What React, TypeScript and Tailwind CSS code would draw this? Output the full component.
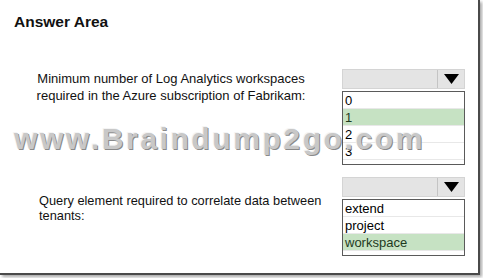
const Dropdown = ({ options, selected }: { options: string[]; selected: number }) => {
  return (
    <div className="w-[123px]">
      <div className="flex h-[20px] border border-[#d4d4d4] bg-[#e4e4e4]">
        <div className="flex-1" />
        <div className="flex w-[27px] items-center justify-center border-l border-[#c4c4c4]">
          <svg width="15" height="10" viewBox="0 0 15 10">
            <polygon points="0,0 15,0 7.5,10" fill="#000" />
          </svg>
        </div>
      </div>
      <div className="mt-[2px] border border-[#5a5a5a] bg-white pb-[4px]">
        {options.map((o, i) => (
          <div
            key={o}
            className={
              "h-[17px] border-b border-[#e8e8e8] pl-[2px] text-[13px] leading-[17px] " +
              (i === selected ? "bg-[#c6e2c3] text-[#1e3a1e]" : "text-black")
            }
          >
            {o}
          </div>
        ))}
      </div>
    </div>
  );
};

export default function App() {
  return (
    <div className="relative h-[278px] w-[483px] bg-white font-['Liberation_Sans',Arial,sans-serif]">
      <div className="h-[275px] w-[480px] border-r-2 border-b-2 border-[#4a4a4a] shadow-[2px_2px_3px_rgba(0,0,0,0.35)]">
        <div className="pl-[14px] pt-[13px] text-[15.5px] font-bold leading-[18px] text-[#111]">Answer Area</div>

        <div className="mt-[38px] grid grid-cols-[342px_123px]">
          <div className="pt-[1px] text-center text-[13px] leading-[17px] text-[#111]">
            Minimum number of Log Analytics workspaces
            <br />
            required in the Azure subscription of Fabrikam:
          </div>
          <Dropdown options={["0", "1", "2", "3"]} selected={1} />
        </div>

        <div className="mt-[12px] grid grid-cols-[342px_123px]">
          <div className="pl-[39px] pt-[16px] text-[12.8px] leading-[15px] text-[#111]">
            Query element required to correlate data between
            <br />
            tenants:
          </div>
          <Dropdown options={["extend", "project", "workspace"]} selected={2} />
        </div>
      </div>

      <div className="pointer-events-none absolute left-[14px] top-[122px] text-[30px] font-bold leading-[34px] tracking-[2.6px] text-[#c8c8c8] [text-shadow:1px_1px_0_#8a8a8a,-1px_-1px_0_#f4f4f4]">
        www.Braindump2go.com
      </div>
    </div>
  );
}
